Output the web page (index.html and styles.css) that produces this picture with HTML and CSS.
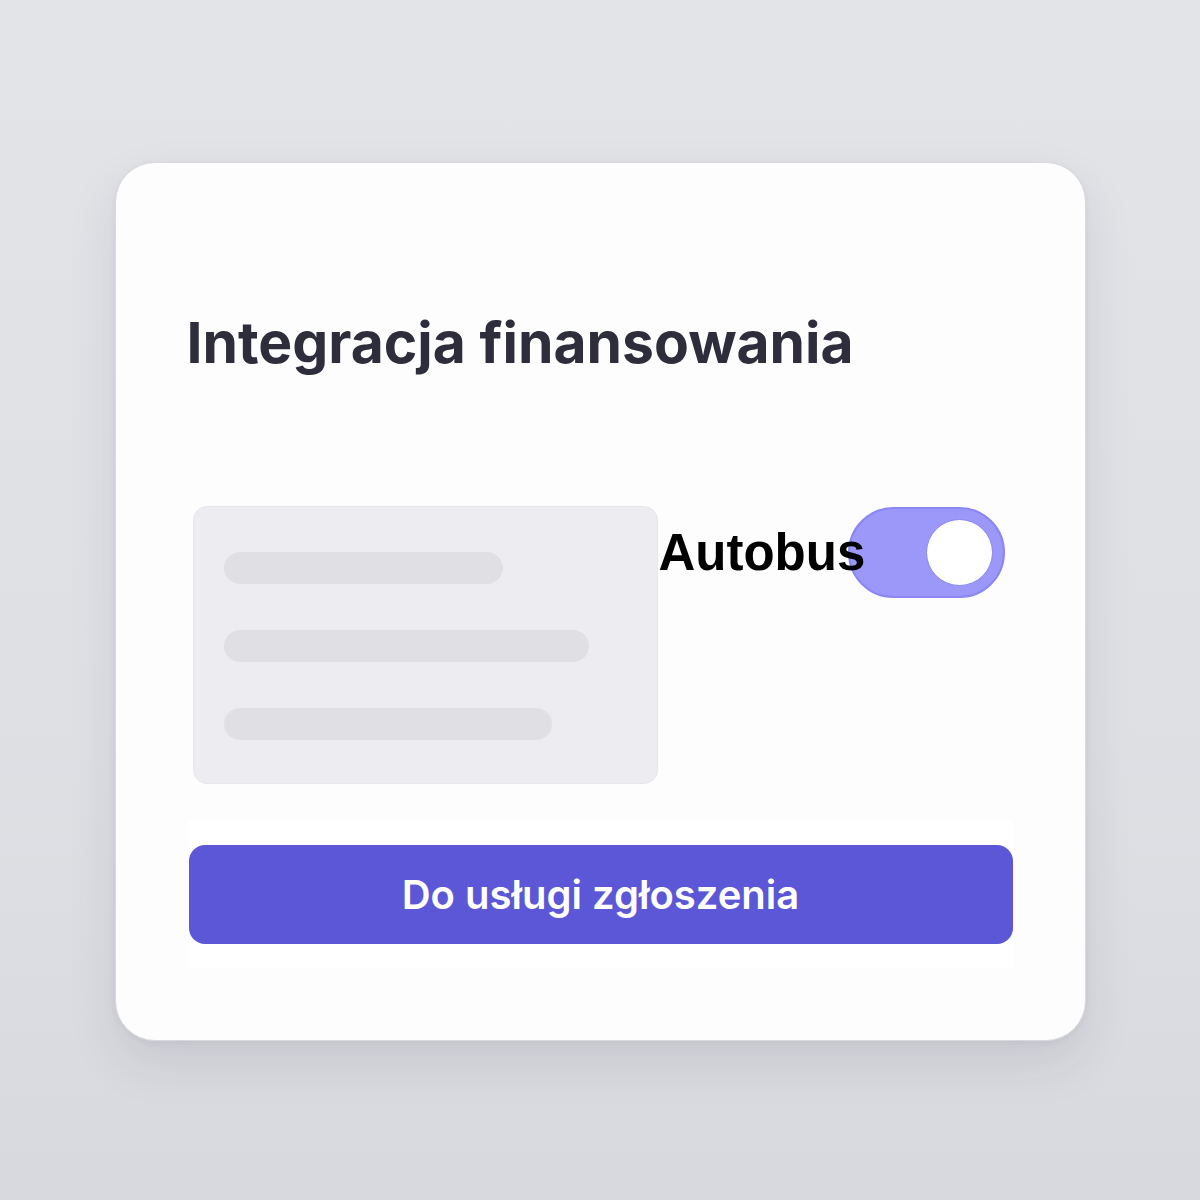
FILE: index.html
```html
<!DOCTYPE html>
<html lang="pl">
<head>
    <meta charset="UTF-8">
    <meta name="viewport" content="width=device-width, initial-scale=1.0">
    <title>Integracja finansowania</title>
    <link rel="stylesheet" href="styles.css">
</head>
<body>
    <div class="card">
        <h1 class="title">Integracja finansowania</h1>

        <div class="content-row">
            <div class="skeleton">
                <div class="skeleton-line line-1"></div>
                <div class="skeleton-line line-2"></div>
                <div class="skeleton-line line-3"></div>
            </div>
            <div class="option">
                <span class="option-label">Autobus</span>
                <div class="toggle on">
                    <div class="toggle-knob"></div>
                </div>
            </div>
        </div>

        <div class="actions">
            <button class="primary-button">Do usługi zgłoszenia</button>
        </div>
    </div>
</body>
</html>
```

FILE: styles.css
```css
* {
    padding: 0;
    margin: 0;
    box-sizing: border-box;
}
body {
    font-family: "Inter", "Liberation Sans", sans-serif;
    min-height: 1200px;
    display: flex;
    align-items: center;
    justify-content: center;
    background: linear-gradient(180deg, #e3e4e8 0%, #dfe0e4 60%, #d8d9de 100%);
}
.card {
    width: 971px;
    height: 879px;
    margin-top: 3px;
    padding: 145px 72px 0 71px;
    background-color: #fdfdfe;
    border: 1px solid #d9d9df;
    border-radius: 40px;
    box-shadow: 0 22px 50px rgba(40, 40, 60, 0.10), 0 2px 6px rgba(40, 40, 60, 0.05);
}
.title {
    font-size: 57px;
    line-height: 69px;
    font-weight: 700;
    color: #2d2d3b;
}
.content-row {
    display: flex;
    align-items: flex-start;
    margin-top: 129px;
    margin-left: 6px;
}
.skeleton {
    width: 465px;
    height: 278px;
    padding: 45px 0 0 30px;
    background-color: #ededf1;
    border: 1px solid #e7e7eb;
    border-radius: 14px;
    display: flex;
    flex-direction: column;
    gap: 46px;
}
.skeleton-line {
    height: 32px;
    border-radius: 16px;
    background-color: #dfdfe4;
}
.line-1 {
    width: 279px;
}
.line-2 {
    width: 365px;
}
.line-3 {
    width: 328px;
}
.option {
    display: flex;
    align-items: center;
    height: 91px;
    margin-top: 1px;
}
.option-label {
    position: relative;
    z-index: 1;
    width: 190px;
    padding-left: 1px;
    white-space: nowrap;
    font-family: "Liberation Sans", "Inter", sans-serif;
    font-size: 51px;
    font-weight: 700;
    color: #000000;
}
.toggle {
    width: 157px;
    height: 91px;
    padding: 0 10px;
    display: flex;
    align-items: center;
    justify-content: flex-end;
    background-color: #9b98fa;
    border: 2px solid #8a86f2;
    border-radius: 46px;
}
.toggle-knob {
    width: 67px;
    height: 67px;
    border-radius: 50%;
    background-color: #ffffff;
    border: 1px solid #8a86f2;
}
.actions {
    margin-top: 37px;
    margin-left: 2px;
    padding: 24px 0;
    background-color: #ffffff;
}
.primary-button {
    display: block;
    width: 100%;
    height: 99px;
    border: none;
    border-radius: 16px;
    background-color: #5b57d6;
    color: #ffffff;
    font-family: "Inter", "Liberation Sans", sans-serif;
    font-size: 40px;
    font-weight: 600;
}
```
